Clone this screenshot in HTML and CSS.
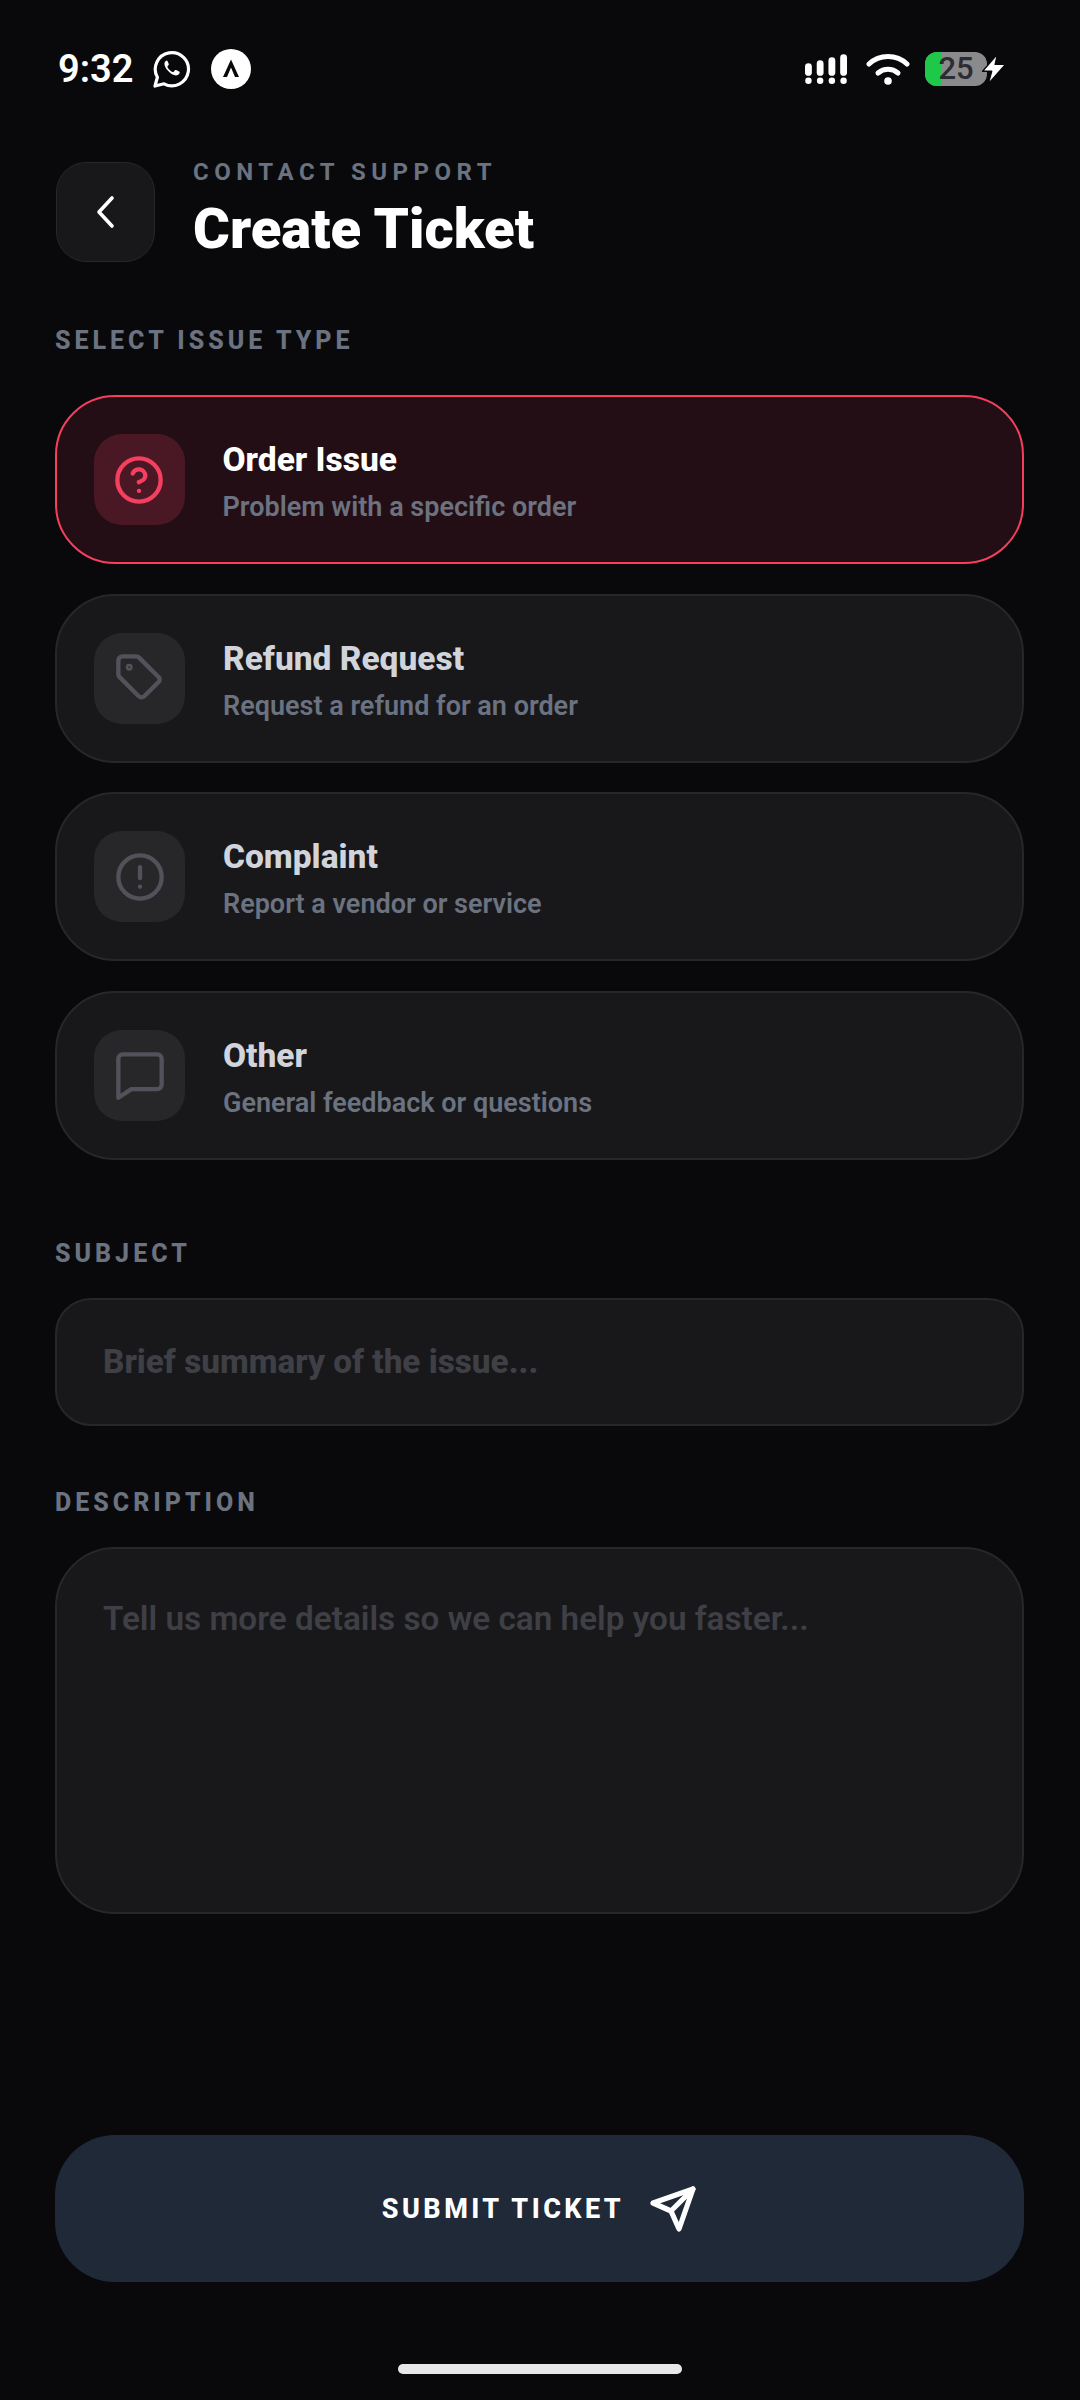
FILE: index.html
```html
<!DOCTYPE html>
<html lang="en">
  <head>
    <meta charset="UTF-8" />
    <meta name="viewport" content="width=device-width, initial-scale=1.0" />
    <title>Create Ticket</title>
    <link rel="stylesheet" href="styles.css">
  </head>
  <body>
    <section class="screen">
      <div class="status-bar">
        <div class="status-left">
          <span class="clock">9:32</span>
          <svg class="wa-icon" viewBox="0 0 40 40" fill="none" stroke="#fff" stroke-width="3.2" stroke-linejoin="round" stroke-linecap="round">
            <path d="M3 37l2.4-8.7A16.6 16.6 0 1 1 12 34.8z" />
            <path d="M14.5 11.5c-1.5.6-2.6 2.6-1.8 5 1.300 3.800 5 8 9.400 9.600 2.500.9 4.800-.2 5.500-2 .3-.8.1-1.200-.5-1.500l-3-1.500c-.6-.3-1-.2-1.400.3l-1 1.300c-.3.4-.7.4-1.200.2-2-.8-4-2.700-5-4.700-.2-.5-.1-.8.2-1.100l.9-1.100c.3-.4.3-.7.100-1.200l-1.200-2.800c-.3-.6-.7-.7-1.500-.5z" fill="#fff" stroke="none" />
          </svg>
          <svg class="expo-icon" viewBox="0 0 40 40">
            <circle cx="20" cy="20" r="20" fill="#fff" />
            <path d="M20 10.500l8 17.500h-4L20 18.500 16 28h-4z" fill="#09090b" />
          </svg>
        </div>
        <div class="status-right">
          <svg class="signal-icon" viewBox="0 0 44 30" fill="#fff">
            <rect x="0" y="9" width="7" height="13" rx="3.500" />
            <rect x="12" y="6" width="7" height="16" rx="3.500" />
            <rect x="24" y="3" width="7" height="19" rx="3.500" />
            <rect x="36" y="0" width="7" height="22" rx="3.500" />
            <circle cx="3.500" cy="27" r="3.300" />
            <circle cx="15.500" cy="27" r="3.300" />
            <circle cx="27.500" cy="27" r="3.300" />
            <circle cx="39.500" cy="27" r="3.300" />
          </svg>
          <svg class="wifi-icon" viewBox="0 0 44 32" fill="none" stroke="#fff" stroke-width="5" stroke-linecap="round">
            <path d="M3 11C13.500 1 30.500 1 41 11" />
            <path d="M12 20c5.800-5 14.200-5 20 0" />
            <circle cx="22" cy="28" r="3.800" fill="#fff" stroke="none" />
          </svg>
          <div class="battery">
            <div class="battery-fill"></div>
            <span class="battery-level">25</span>
          </div>
          <svg class="bolt-icon" viewBox="0 0 24 28" fill="#fff" stroke="#09090b" stroke-width="1.200" stroke-linejoin="round">
            <path d="M15 1L2 16h8l-3 11 15-17h-9z" />
          </svg>
        </div>
      </div>

      <div class="header">
        <button class="back-btn">
          <svg viewBox="0 0 24 24" fill="none" stroke="#fff" stroke-width="1.800" stroke-linecap="round" stroke-linejoin="round">
            <path d="M15 5l-6.500 7 6.500 7" />
          </svg>
        </button>
        <div class="header-text">
          <p class="eyebrow">CONTACT SUPPORT</p>
          <h1>Create Ticket</h1>
        </div>
      </div>

      <p class="field-label issue-label">SELECT ISSUE TYPE</p>

      <div class="issue-list">
        <div class="issue-card active">
          <div class="issue-icon">
            <svg viewBox="0 0 24 24">
              <circle cx="12" cy="12" r="10" />
              <path d="M9.100 9a3 3 0 0 1 5.800 1c0 2-3 3-3 3" />
              <path d="M12 17h.01" />
            </svg>
          </div>
          <div class="issue-text">
            <div class="issue-title">Order Issue</div>
            <div class="issue-sub">Problem with a specific order</div>
          </div>
        </div>

        <div class="issue-card">
          <div class="issue-icon">
            <svg viewBox="0 0 24 24">
              <path d="M21 13.400l-6.900 6.900a2 2 0 0 1-2.800 0L2.600 11.600A2 2 0 0 1 2 10.200V4a2 2 0 0 1 2-2h6.200a2 2 0 0 1 1.400.6L21 12z" />
              <circle cx="7" cy="7" r="1" stroke-width="1.200" />
            </svg>
          </div>
          <div class="issue-text">
            <div class="issue-title">Refund Request</div>
            <div class="issue-sub">Request a refund for an order</div>
          </div>
        </div>

        <div class="issue-card">
          <div class="issue-icon">
            <svg viewBox="0 0 24 24">
              <circle cx="12" cy="12" r="10" />
              <path d="M12 7.500v5" />
              <path d="M12 16.500h.01" />
            </svg>
          </div>
          <div class="issue-text">
            <div class="issue-title">Complaint</div>
            <div class="issue-sub">Report a vendor or service</div>
          </div>
        </div>

        <div class="issue-card">
          <div class="issue-icon">
            <svg viewBox="0 0 24 24">
              <path d="M22 16.500a2 2 0 0 1-2 2H8l-6 4V4.500a2 2 0 0 1 2-2h16a2 2 0 0 1 2 2z" />
            </svg>
          </div>
          <div class="issue-text">
            <div class="issue-title">Other</div>
            <div class="issue-sub">General feedback or questions</div>
          </div>
        </div>
      </div>

      <p class="field-label subject-label">SUBJECT</p>
      <div class="input-box subject-box">Brief summary of the issue...</div>

      <p class="field-label description-label">DESCRIPTION</p>
      <div class="input-box description-box">Tell us more details so we can help you faster...</div>

      <button class="submit-btn">
        <span>SUBMIT TICKET</span>
        <svg viewBox="0 0 24 24" fill="none" stroke="#fff" stroke-width="2.600" stroke-linecap="round" stroke-linejoin="round">
          <path d="M22 2L15 22l-4-9-9-4z" />
          <path d="M22 2L11 13" />
        </svg>
      </button>

      <div class="home-bar"></div>
    </section>
  </body>
</html>
```

FILE: styles.css
```css
* {
  box-sizing: border-box;
}

body {
  margin: 0;
  background-color: #09090b;
  font-family: Roboto, "Liberation Sans", sans-serif;
}

p,
h1 {
  margin: 0;
}

.screen {
  display: flex;
  flex-direction: column;
  width: 1080px;
  height: 2400px;
  padding: 0 56px 0 55px;
}

.status-bar {
  display: flex;
  justify-content: space-between;
  align-items: center;
  height: 44px;
  margin-top: 47px;
}

.status-left {
  display: flex;
  align-items: center;
}

.clock {
  margin-left: 3px;
  color: #fff;
  font-size: 38px;
  font-weight: 600;
}

.wa-icon {
  width: 40px;
  height: 40px;
  margin-left: 19px;
}

.expo-icon {
  width: 40px;
  height: 40px;
  margin-left: 19px;
}

.status-right {
  display: flex;
  align-items: center;
  margin-right: 16px;
}

.signal-icon {
  width: 43px;
  height: 30px;
}

.wifi-icon {
  width: 44px;
  height: 32px;
  margin-left: 18px;
}

.battery {
  position: relative;
  width: 62px;
  height: 34px;
  margin-left: 15px;
  border-radius: 12px;
  background-color: #8a8a8c;
  text-align: center;
}

.battery-fill {
  position: absolute;
  top: 0;
  left: 0;
  width: 16px;
  height: 100%;
  border-radius: 12px 0 0 12px;
  background-color: #1ec94a;
}

.battery-level {
  position: relative;
  display: block;
  color: #2c2c33;
  font-size: 31px;
  font-weight: 500;
  line-height: 34px;
}

.bolt-icon {
  position: relative;
  width: 28px;
  height: 32px;
  margin-left: -7px;
}

.header {
  display: flex;
  align-items: center;
  gap: 38px;
  margin-top: 69px;
}

.back-btn {
  display: flex;
  justify-content: center;
  align-items: center;
  width: 99px;
  height: 100px;
  margin-left: 1px;
  padding: 0;
  border: 1.500px solid #27272a;
  border-radius: 30px;
  background-color: #18181b;
}

.back-btn svg {
  width: 48px;
  height: 48px;
}

.eyebrow {
  margin-top: -2px;
  color: #6b7280;
  font-size: 24px;
  font-weight: 700;
  letter-spacing: 5.500px;
  line-height: 28px;
}

h1 {
  margin-top: 8px;
  color: #fff;
  font-size: 56.250px;
  font-weight: 900;
  line-height: 70px;
}

.field-label {
  color: #6b7280;
  font-size: 25px;
  font-weight: 800;
  letter-spacing: 4px;
  line-height: 30px;
}

.issue-label {
  margin-top: 62px;
}

.issue-list {
  display: flex;
  flex-direction: column;
  gap: 29.500px;
  margin-top: 39px;
}

.issue-card {
  display: flex;
  align-items: center;
  gap: 38px;
  height: 169px;
  padding: 0 37px;
  border: 2px solid #27272a;
  border-radius: 60px;
  background-color: #18181b;
}

.issue-card.active {
  padding: 0 36.500px;
  border: 2.500px solid #f43f5e;
  background-color: #240e15;
}

.issue-icon {
  display: flex;
  justify-content: center;
  align-items: center;
  width: 91px;
  height: 91px;
  border-radius: 28px;
  background-color: #27272a;
}

.issue-icon svg {
  width: 52px;
  height: 52px;
  fill: none;
  stroke: #52525b;
  stroke-width: 2;
  stroke-linecap: round;
  stroke-linejoin: round;
}

.active .issue-icon {
  background-color: #4a1825;
}

.active .issue-icon svg {
  stroke: #f43f5e;
}

.issue-text {
  padding-top: 4px;
}

.issue-title {
  color: #d1d5db;
  font-size: 33.500px;
  font-weight: 800;
  line-height: 40px;
}

.active .issue-title {
  color: #fff;
}

.issue-sub {
  margin-top: 11px;
  color: #6b7280;
  font-size: 27px;
  font-weight: 600;
  line-height: 32px;
}

.subject-label {
  margin-top: 79px;
}

.input-box {
  margin-top: 29px;
  border: 2px solid #27272a;
  background-color: #18181b;
  color: #3f3f46;
  font-size: 33.300px;
}

.subject-box {
  height: 128px;
  padding: 0 46px;
  border-radius: 36px;
  font-weight: 800;
  line-height: 124px;
}

.description-label {
  margin-top: 62px;
}

.description-box {
  height: 367px;
  margin-top: 29px;
  padding: 50px 46px;
  border-radius: 60px;
  font-weight: 600;
  line-height: 40px;
}

.submit-btn {
  display: flex;
  justify-content: center;
  align-items: center;
  gap: 25px;
  height: 147px;
  margin-top: auto;
  border: none;
  border-radius: 60px;
  background-color: #1f2937;
  color: #fff;
  font-family: inherit;
  font-size: 27px;
  font-weight: 800;
  letter-spacing: 3.450px;
}

.submit-btn svg {
  width: 48px;
  height: 48px;
}

.home-bar {
  align-self: center;
  width: 284px;
  height: 10px;
  margin-top: 82px;
  margin-bottom: 26px;
  border-radius: 5px;
  background-color: #e8e8e8;
}
```
